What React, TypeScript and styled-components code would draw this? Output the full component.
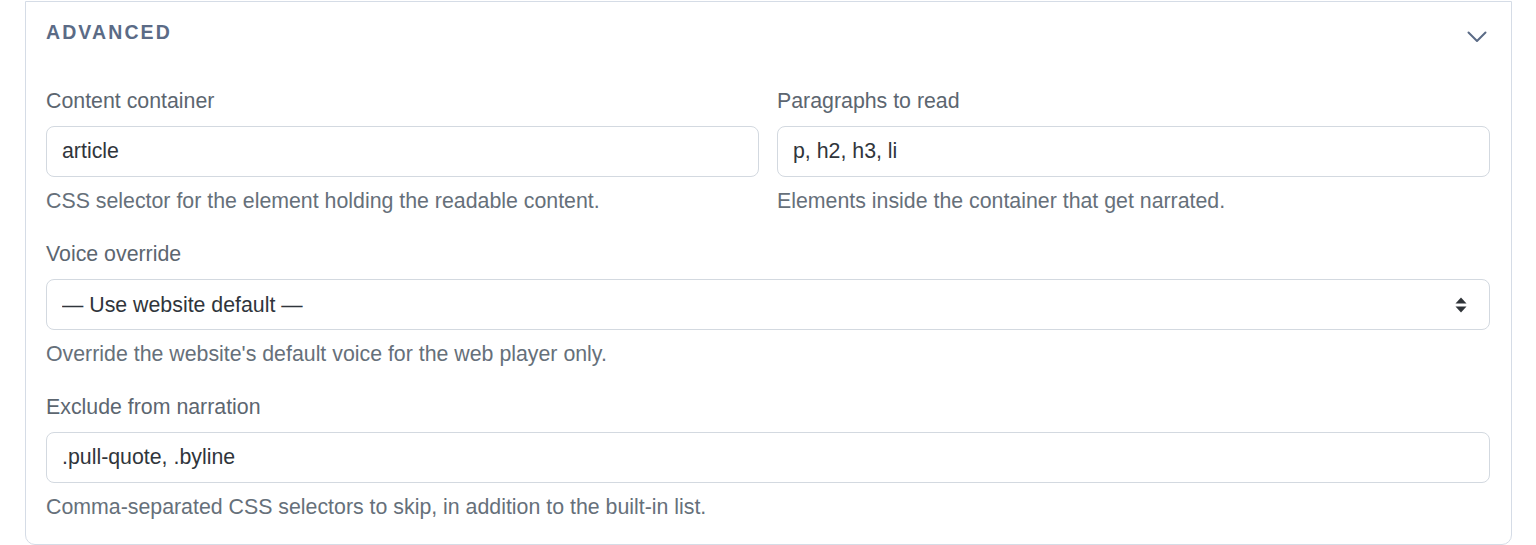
import React from "react";
import styled, { createGlobalStyle } from "styled-components";

const Global = createGlobalStyle`
  html, body { margin: 0; padding: 0; background: #ffffff; }
  body { font-family: "Liberation Sans", Arial, Helvetica, sans-serif; }
  * { box-sizing: border-box; }
`;

const Page = styled.div`
  padding: 1px 24px 0 25px;
`;

const Card = styled.section`
  border: 1px solid #d5dce6;
  border-radius: 0 0 10px 10px;
  padding: 18px 21px 25px 20px;
  background: #fff;
`;

const Header = styled.div`
  display: flex;
  justify-content: space-between;
  align-items: flex-start;
  height: 24px;
  margin-bottom: 45px;
`;

const Title = styled.h3`
  margin: 0;
  font-size: 19.5px;
  line-height: 25px;
  font-weight: 700;
  letter-spacing: 2.1px;
  color: #5b6b86;
  text-transform: uppercase;
`;

const Chevron = styled.svg`
  width: 20px;
  height: 12px;
  margin-top: 11px;
  margin-right: 3px;
`;

const Fields = styled.div`
  display: flex;
  flex-direction: column;
  gap: 29px;
`;

const Row = styled.div`
  display: grid;
  grid-template-columns: 1fr 1fr;
  column-gap: 18px;
`;

const Field = styled.div`
  display: flex;
  flex-direction: column;
  min-width: 0;
`;

const Label = styled.label`
  font-size: 21.33px;
  line-height: 24px;
  color: #5c6670;
  margin-bottom: 13px;
`;

const inputBase = `
  width: 100%;
  height: 51px;
  border: 1px solid #d3d9e0;
  border-radius: 8px;
  padding: 0 15px;
  font-family: "Liberation Sans", Arial, Helvetica, sans-serif;
  font-size: 21.33px;
  color: #30353b;
  background: #fff;
  outline: none;
`;

const Input = styled.input`
  ${inputBase}
`;

const SelectWrap = styled.div`
  position: relative;
`;

const Select = styled.select`
  ${inputBase}
  appearance: none;
  -webkit-appearance: none;
  padding-right: 48px;
`;

const SelectArrows = styled.svg`
  position: absolute;
  right: 23px;
  top: 50%;
  transform: translateY(-50%);
  width: 12px;
  height: 16px;
  pointer-events: none;
`;

const Help = styled.div`
  margin-top: 12px;
  font-size: 21.33px;
  line-height: 24px;
  color: #66707a;
`;

type TextFieldProps = { label: string; value: string; help: string };

const TextField = ({ label, value, help }: TextFieldProps) => (
  <Field>
    <Label>{label}</Label>
    <Input defaultValue={value} />
    <Help>{help}</Help>
  </Field>
);

export default function App() {
  return (
    <>
      <Global />
      <Page>
        <Card>
          <Header>
            <Title>Advanced</Title>
            <Chevron viewBox="0 0 20 12" fill="none">
              <polyline
                points="1.5,1.5 10,10 18.5,1.5"
                stroke="#5b6b86"
                strokeWidth="2"
                strokeLinecap="round"
                strokeLinejoin="round"
              />
            </Chevron>
          </Header>
          <Fields>
            <Row>
              <TextField
                label="Content container"
                value="article"
                help="CSS selector for the element holding the readable content."
              />
              <TextField
                label="Paragraphs to read"
                value="p, h2, h3, li"
                help="Elements inside the container that get narrated."
              />
            </Row>
            <Field>
              <Label>Voice override</Label>
              <SelectWrap>
                <Select defaultValue="default">
                  <option value="default">— Use website default —</option>
                </Select>
                <SelectArrows viewBox="0 0 12 16">
                  <path d="M6 0.5 L11.5 6.5 H0.5 Z" fill="#2f3338" />
                  <path d="M6 15.5 L11.5 9.5 H0.5 Z" fill="#2f3338" />
                </SelectArrows>
              </SelectWrap>
              <Help>Override the website's default voice for the web player only.</Help>
            </Field>
            <TextField
              label="Exclude from narration"
              value=".pull-quote, .byline"
              help="Comma-separated CSS selectors to skip, in addition to the built-in list."
            />
          </Fields>
        </Card>
      </Page>
    </>
  );
}
